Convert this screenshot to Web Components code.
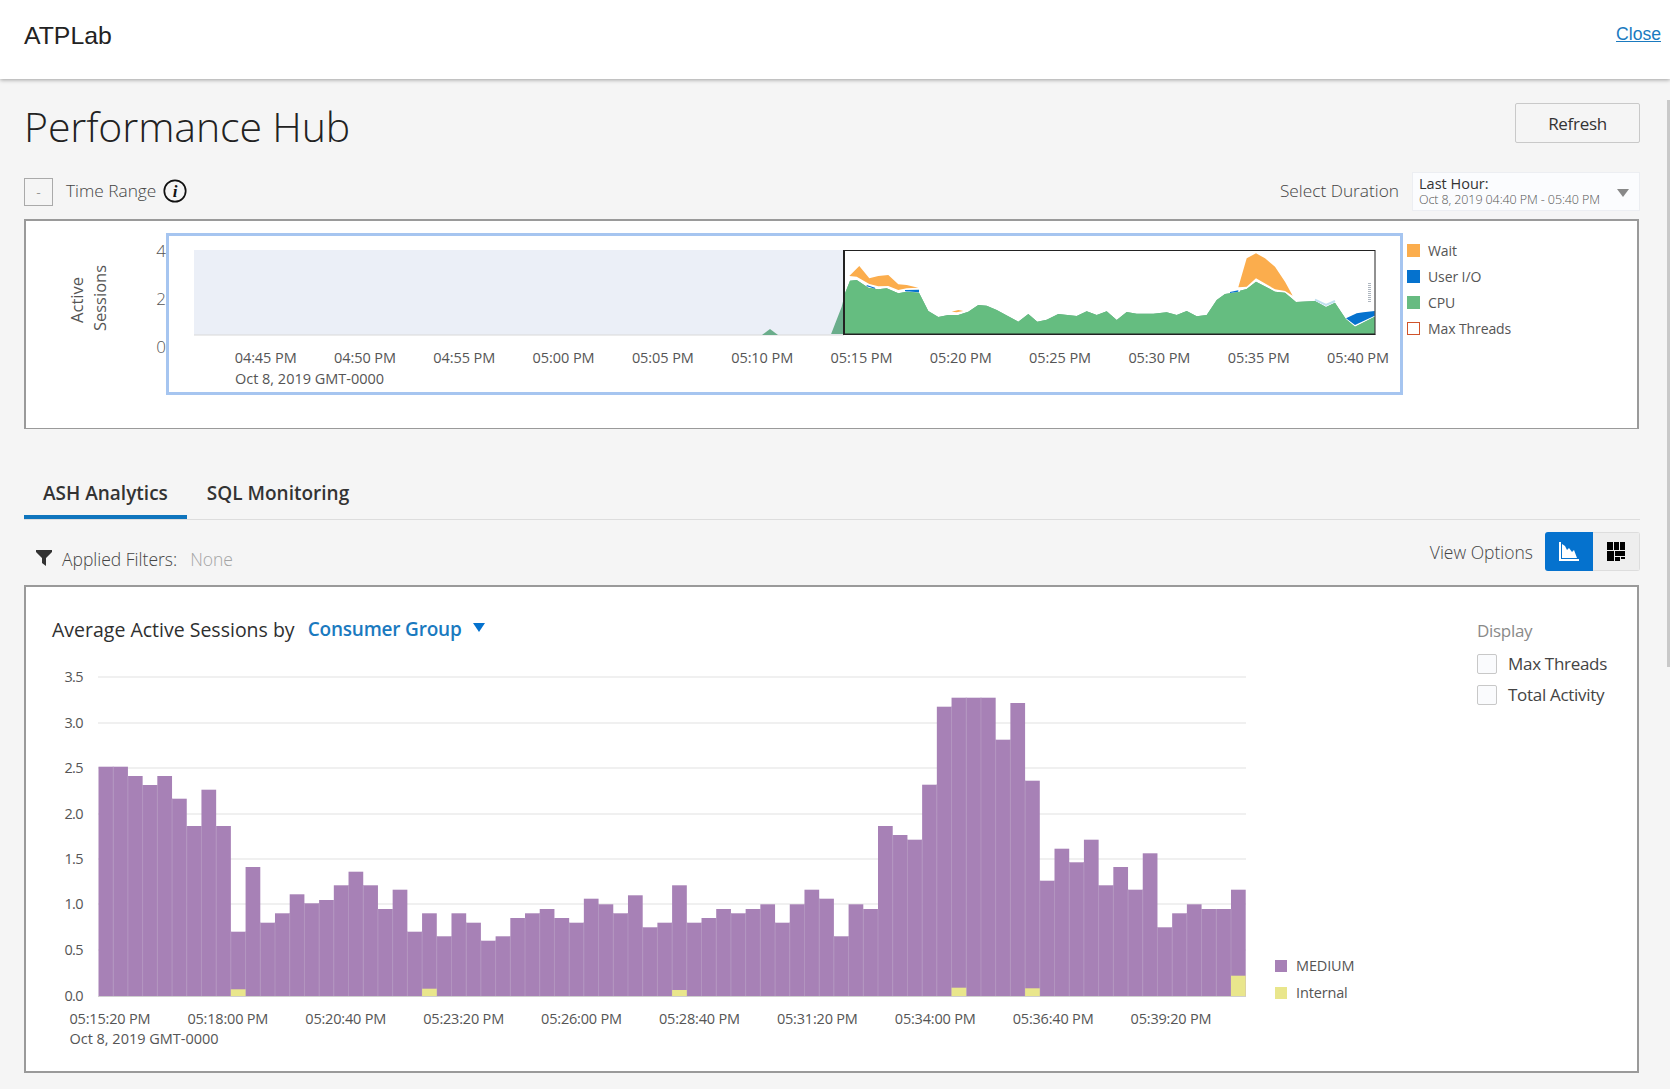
<!DOCTYPE html>
<html lang="en">
<head>
<meta charset="utf-8">
<title>Performance Hub</title>
<style>
  html, body { margin: 0; height: 100%; overflow: hidden; }
  body {
    background: #f5f5f5;
    color: #333;
    font-family: "Open Sans", "Liberation Sans", sans-serif;
  }
  page-scrollbar {
    position: fixed;
    right: 0;
    top: 100px;
    width: 3px;
    height: 567px;
    background: #c9c9c9;
  }
</style>
</head>
<body>
<app-header></app-header>
<hub-page></hub-page>
<page-scrollbar></page-scrollbar>

<script>
(function(){

  const SVG_TEXT = 'font-family:"Open Sans","Liberation Sans",sans-serif;';

  function define(name, css, html) {
    customElements.define(name, class extends HTMLElement {
      constructor() {
        super();
        this.attachShadow({ mode: "open" });
        this.shadowRoot.innerHTML = "<style>" + css + "</style>" + (typeof html === "function" ? html(this) : html);
      }
    });
  }

  define("page-scrollbar", ":host{display:block}", "");

  define("app-header", `
    :host {
      display: flex;
      position: relative;
      z-index: 2;
      box-sizing: border-box;
      height: 79px;
      padding: 0 9px 7px 24px;
      align-items: center;
      justify-content: space-between;
      background: #fff;
      box-shadow: 0 1px 4px rgba(0,0,0,.35);
      font-family: "Liberation Sans", Arial, sans-serif;
    }
    .name { font-size: 24.8px; color: #222; }
    a { font-size: 17.6px; color: #1a7abf; text-decoration: underline; margin-bottom: 4px; }
  `, `<span class="name">ATPLab</span><a href="#">Close</a>`);

  define("plain-button", `
    :host {
      display: inline-flex;
      box-sizing: border-box;
      align-items: center;
      justify-content: center;
      border: 1px solid #c9c9c9;
      border-radius: 2px;
      background: #f5f5f5;
      color: #333;
    }
  `, `<slot></slot>`);

  define("time-legend", `
    :host { display: block; padding: 16px 0 0 3px; font-size: 14px; color: #555; letter-spacing: -.1px; }
    div { display: flex; align-items: center; height: 26.2px; gap: 8px; }
    i { display: block; box-sizing: border-box; width: 13px; height: 13px; }
  `, `
    <div><i style="background:#fbad4d"></i>Wait</div>
    <div><i style="background:#0572ce"></i>User I/O</div>
    <div><i style="background:#67bb81"></i>CPU</div>
    <div><i style="border:1.5px solid #d0532b"></i>Max Threads</div>
  `);

  function pts(list, ox, oy) {
    const out = [];
    for (let i = 0; i < list.length; i += 2) {
      out.push((ox + list[i] / 3).toFixed(1) + "," + (oy + list[i + 1] / 3).toFixed(1));
    }
    return out.join(" ");
  }

  // overview chart, drawn in page coordinates through the viewBox
  function overviewSvg() {
    const left = pts([33,328, 65,245, 75,205, 90,167, 110,165, 145,188, 175,193, 200,190, 235,205, 260,200, 297,203,
      325,258, 355,276, 385,270, 415,270, 445,260, 475,240, 500,242, 530,255, 595,290, 625,267, 652,290, 680,284,
      715,267, 770,273, 800,259, 830,270, 860,259, 890,285, 920,261, 950,266, 1000,266, 1040,262, 1070,270, 1100,258,
      1130,274, 1160,270, 1190,225, 1215,207, 1260,200], 820, 225);
    const right = pts([60,197, 80,192, 108,170, 165,200, 195,203, 228,231, 285,228, 318,246, 345,233, 378,283, 405,305, 464,275, 464,328], 1220, 225);
    const green = left + " " + right + " 831,334";
    const waitA = pts([88,153, 118,123, 148,160, 175,153, 205,150, 235,178, 260,180, 295,188, 260,190, 235,195, 205,183, 175,184, 148,177, 110,155], 820, 225);
    const waitB = pts([395,260, 415,255, 430,258, 410,262], 820, 225);
    const waitC = pts([55,187, 80,100, 108,85, 135,100, 165,125, 195,170, 218,212, 195,198, 165,193, 108,160, 80,185], 1220, 225);
    const ioA = pts([140,180, 165,188, 165,191, 140,184], 820, 225);
    const ioD = pts([255,195, 297,194, 297,202, 255,199], 820, 225);
    const ioB = pts([378,280, 410,265, 430,262, 464,258, 464,272, 405,300], 1220, 225);
    const ioC = pts([30,201, 55,196, 55,200, 30,204], 1220, 225);
    const times = ["04:45 PM","04:50 PM","04:55 PM","05:00 PM","05:05 PM","05:10 PM","05:15 PM","05:20 PM","05:25 PM","05:30 PM","05:35 PM","05:40 PM"];
    const labels = times.map((t, i) =>
      `<text x="${265.7 + i * 99.3}" y="363" text-anchor="middle" textLength="62">${t}</text>`).join("");
    return `<svg width="1378" height="175" viewBox="26 221 1378 175" style="${SVG_TEXT}display:block">
      <rect x="194" y="250" width="650" height="85" fill="#ebeff7"/>
      <line x1="194" y1="335" x2="844" y2="335" stroke="#d8d8d8"/>
      <polygon points="762,335 770,329 778,335" fill="#6aad8b"/>
      <clipPath id="sel"><rect x="844" y="250" width="531" height="85"/></clipPath>
      <polygon points="${green}" fill="#6aad8b"/>
      <g clip-path="url(#sel)">
        <polygon points="${green}" fill="#65bd80"/>
        <polyline points="${pts([88,160, 110,158, 145,182, 175,187, 200,184, 235,199, 260,194, 297,197],820,225)}" fill="none" stroke="#fff" stroke-width="1.5"/>
        <polyline points="${pts([60,191, 80,186, 108,164, 165,194, 195,197, 218,214],1220,225)}" fill="none" stroke="#fff" stroke-width="1.5"/>
        <polyline points="${pts([285,224, 318,240, 345,228],1220,225)}" fill="none" stroke="#bfe0ee" stroke-width="2"/>
        <polygon points="${waitA}" fill="#fbad4d"/>
        <polygon points="${waitB}" fill="#fbad4d"/>
        <polygon points="${waitC}" fill="#fbad4d"/>
        <polygon points="${ioA}" fill="#0572ce"/>
        <polygon points="${ioD}" fill="#0572ce"/>
        <polygon points="${ioB}" fill="#0572ce"/>
        <polygon points="${ioC}" fill="#0572ce"/>
      </g>
      <rect x="844" y="250.5" width="531" height="83.5" fill="none" stroke="#222" stroke-width="1"/>
      <line x1="844" y1="250" x2="844" y2="335" stroke="#222" stroke-width="2"/>
      <line x1="844" y1="334.5" x2="1375.5" y2="334.5" stroke="#222" stroke-width="1"/>
      <line x1="1369.5" y1="283" x2="1369.5" y2="302" stroke="#aeb6bf" stroke-width="3" stroke-dasharray="1 1"/>
      <rect x="167.5" y="234.5" width="1234" height="159" fill="none" stroke="#a6c5f0" stroke-width="3"/>
      <g font-size="17" font-weight="300" fill="#555" text-anchor="end">
        <text x="166" y="256.5">4</text><text x="166" y="305">2</text><text x="166" y="353">0</text>
      </g>
      <g font-size="16.5" fill="#555" text-anchor="middle">
        <text transform="translate(82.5,300) rotate(-90)">Active</text>
        <text transform="translate(106,298) rotate(-90)">Sessions</text>
      </g>
      <g font-size="14.5" fill="#555">${labels}
        <text x="235" y="384" textLength="149">Oct 8, 2019 GMT-0000</text>
      </g>
    </svg>`;
  }

  define("time-panel", `
    :host {
      display: flex;
      box-sizing: border-box;
      height: 210px;
      border: 2px solid #9a9a9a;
      border-bottom-width: 1px;
      background: #fff;
    }
  `, () => overviewSvg() + `<time-legend></time-legend>`);

  define("tab-bar", `
    :host {
      display: flex;
      box-sizing: border-box;
      height: 42px;
      border-bottom: 1px solid #ddd;
      font-size: 19px;
      font-weight: 600;
      color: #333;
    }
    span { display: block; padding: 0 19px; line-height: 30px; height: 41px; box-sizing: border-box; }
    .on { border-bottom: 4px solid #0f75bd; }
  `, `<span class="on">ASH Analytics</span><span style="padding-left:20px">SQL Monitoring</span>`);

  define("view-switch", `
    :host { display: flex; height: 39px; border-radius: 3px; overflow: hidden; }
    div { width: 48px; display: flex; align-items: center; justify-content: center; }
    .on { background: #0572ce; }
    .off { width: 47px; box-sizing: border-box; background: #eee; border: 1px solid #ddd; border-left: 0; }
    svg { display: block; }
  `, `
    <div class="on">
      <svg width="20" height="20" viewBox="0 0 20 20" fill="#fff">
        <path d="M0 0H2V17H20V19H0Z"/>
        <path d="M3 16V2L6 4L8 8L10 6L13 10L15 8L18 16Z"/>
      </svg>
    </div>
    <div class="off">
      <svg width="18" height="19" viewBox="0 0 18 19" fill="#000">
        <rect x="0" y="0" width="6" height="8"/><rect x="7" y="0" width="5" height="8"/><rect x="13" y="0" width="5" height="8"/>
        <rect x="0" y="9" width="7" height="10"/><rect x="8" y="9" width="10" height="5"/><rect x="8" y="15" width="5" height="4"/><rect x="14" y="15" width="4" height="2"/>
      </svg>
    </div>
  `);

  // bar tops read off the reference, in thirds of a pixel below y=660
  const TOPS = [320,320,348,375,348,416,498,389,498,815,621,788,760,703,730,720,676,635,676,747,689,815,760,829,760,788,842,829,774,760,747,774,788,716,733,760,706,
    802,788,676,788,774,747,760,747,733,788,733,689,716,829,733,747,498,525,539,374,140,113,113,113,239,129,362,662,566,607,539,676,621,689,580,802,760,733,747,747,689];
  const INTERNAL = { 9: 988, 22: 986, 39: 990, 58: 983, 63: 985, 77: 947 };

  function barSvg() {
    const x0 = 98.5, w = 1147.2 / TOPS.length, base = 996;
    let bars = "", gaps = "", extra = "";
    TOPS.forEach((t, i) => {
      const x = x0 + i * w, top = 660 + t / 3;
      bars += `<rect x="${x.toFixed(2)}" y="${top.toFixed(1)}" width="${w.toFixed(2)}" height="${(base - top).toFixed(1)}"/>`;
      if (i) gaps += `<line x1="${x.toFixed(2)}" x2="${x.toFixed(2)}" y1="${Math.max(top, 660 + TOPS[i - 1] / 3).toFixed(1)}" y2="${base}"/>`;
      if (INTERNAL[i]) {
        const y = 660 + INTERNAL[i] / 3;
        extra += `<rect x="${x.toFixed(2)}" y="${y.toFixed(1)}" width="${w.toFixed(2)}" height="${(base - y).toFixed(1)}"/>`;
      }
    });
    const ticks = ["0.0","0.5","1.0","1.5","2.0","2.5","3.0","3.5"];
    const ys = [996,950,904,859,814,768,723,677];
    const grid = ys.slice(1).map(y => `<line x1="98" x2="1246" y1="${y}" y2="${y}"/>`).join("");
    const ylab = ticks.map((t, i) => `<text x="64.5" y="${ys[i] + 4.5}" textLength="19">${t}</text>`).join("");
    const times = ["05:15:20 PM","05:18:00 PM","05:20:40 PM","05:23:20 PM","05:26:00 PM","05:28:40 PM","05:31:20 PM","05:34:00 PM","05:36:40 PM","05:39:20 PM"];
    const xlab = times.map((t, i) => `<text x="${69.5 + i * 117.9}" y="1024" textLength="81">${t}</text>`).join("");
    return `<svg width="1249" height="392" viewBox="26 656 1249 392" style="${SVG_TEXT}display:block">
      <g stroke="#f0f0f0" stroke-width="2">${grid}</g>
      <g fill="#a781b6">${bars}</g>
      <g stroke="#b294bf" stroke-width="1">${gaps}</g>
      <g fill="#e9e68c">${extra}</g>
      <line x1="98" x2="1246" y1="996.5" y2="996.5" stroke="#cfcfcf"/>
      <g font-size="14.5" fill="#555">${ylab}${xlab}
        <text x="69.5" y="1044" textLength="149">Oct 8, 2019 GMT-0000</text>
      </g>
    </svg>`;
  }

  define("bar-legend", `
    :host { display: block; margin-bottom: 42px; font-size: 14.5px; color: #555; letter-spacing: -.15px; }
    div { display: flex; align-items: center; height: 27px; gap: 9px; }
    i { display: block; width: 12px; height: 12px; }
  `, `
    <div><i style="background:#a781b6"></i>MEDIUM</div>
    <div><i style="background:#e9e68c"></i>Internal</div>
  `);

  define("display-options", `
    :host { display: block; width: 160px; padding-top: 32px; font-size: 17px; color: #444; letter-spacing: -.3px; }
    .head { color: #8a8a8a; line-height: 24px; margin-bottom: 5px; }
    label { display: flex; align-items: center; height: 31px; gap: 11px; }
    i { display: block; box-sizing: border-box; width: 20px; height: 20px; border: 1px solid #c8c8c8; border-radius: 2px; background: #fafbfd; }
  `, `
    <div class="head">Display</div>
    <label><i></i>Max Threads</label>
    <label><i></i>Total Activity</label>
  `);

  define("ash-panel", `
    :host {
      display: flex;
      box-sizing: border-box;
      height: 488px;
      border: 2px solid #9a9a9a;
      background: #fff;
    }
    .main { flex: 1; min-width: 0; }
    .title {
      display: flex;
      height: 69px;
      box-sizing: border-box;
      padding: 30px 0 0 26px;
      font-size: 19.5px;
      color: #2f2f2f;
      line-height: 26px;
    }
    .group { margin: -1px 0 0 13px; font-size: 19px; letter-spacing: -.2px; color: #1a7abf; font-weight: 600; }
    .caret { margin: 6px 0 0 11px; width: 0; height: 0; border: 6px solid transparent; border-top: 9px solid #0572ce; border-bottom: 0; }
    .row { display: flex; align-items: flex-end; }
  `, () => `
    <div class="main">
      <div class="title"><span>Average Active Sessions by</span><span class="group">Consumer Group</span><span class="caret"></span></div>
      <div class="row">${barSvg()}<bar-legend></bar-legend></div>
    </div>
    <display-options></display-options>
  `);

  define("hub-page", `
    :host { display: block; padding: 0 30px 0 24px; }
    .top { display: flex; justify-content: space-between; align-items: center; height: 40px; margin-top: 24px; }
    h1 { margin: 0; padding-top: 6px; font-size: 41px; font-weight: 300; color: #222; line-height: 40px; letter-spacing: -.1px; }
    plain-button.refresh { width: 125px; height: 40px; font-size: 17px; letter-spacing: -.3px; }
    .range { display: flex; align-items: center; height: 39px; margin-top: 29px; font-size: 17.3px; font-weight: 300; color: #444; }
    .range span { position: relative; top: -1px; }
    plain-button.mini { width: 29px; height: 28px; font-size: 14px; color: #777; border-color: #aaa; border-radius: 0; margin-right: 13px; }
    .info { margin: 0 0 2px 7px; display: block; }
    .range .sp { flex: 1; }
    .pick {
      position: relative;
      box-sizing: border-box;
      width: 228px;
      height: 39px;
      margin-left: 13px;
      padding: 2px 0 0 6px;
      background: #fbfcfe;
      border: 1px solid #eceef2;
      color: #333;
    }
    .pick b { display: block; font-size: 14.5px; font-weight: 500; line-height: 17px; }
    .pick small { display: block; font-size: 12.5px; line-height: 15px; color: #555; letter-spacing: -.1px; }
    .pick::after {
      content: "";
      position: absolute;
      right: 10px;
      top: 16px;
      border: 6px solid transparent;
      border-top: 8px solid #888;
      border-bottom: 0;
    }
    time-panel { margin: 8px 1px 0 0; }
    tab-bar { margin-top: 49px; }
    .filters { display: flex; align-items: center; height: 39px; margin-top: 12px; font-size: 17.5px; font-weight: 300; color: #444; }
    .funnel { margin: 13px 10px 0 12px; display: block; }
    .none { margin-left: 13px; color: #a4a4a4; }
    .filters span { position: relative; top: 7px; }
    .filters .sp { flex: 1; }
    .filters .view { top: 0; margin-right: 12px; }
    ash-panel { margin: 14px 1px 0 0; }
  `, `
    <div class="top">
      <h1>Performance Hub</h1>
      <plain-button class="refresh">Refresh</plain-button>
    </div>
    <div class="range">
      <plain-button class="mini">-</plain-button>
      <span>Time Range</span>
      <svg class="info" width="24" height="24" viewBox="0 0 24 24">
        <circle cx="12" cy="12" r="10.7" fill="none" stroke="#111" stroke-width="1.7"/>
        <text x="12" y="17.5" text-anchor="middle" font-family="Liberation Serif, serif" font-style="italic" font-weight="700" font-size="17" fill="#111">i</text>
      </svg>
      <span class="sp"></span>
      <span>Select Duration</span>
      <div class="pick"><b>Last Hour:</b><small>Oct 8, 2019 04:40 PM - 05:40 PM</small></div>
    </div>
    <time-panel></time-panel>
    <tab-bar></tab-bar>
    <div class="filters">
      <svg class="funnel" width="16" height="16" viewBox="0 0 16 16"><path d="M0 0H16V2L10 8V16L6 13V8L0 2Z" fill="#333"/></svg>
      <span>Applied Filters:</span><span class="none">None</span>
      <span class="sp"></span>
      <span class="view">View Options</span>
      <view-switch></view-switch>
    </div>
    <ash-panel></ash-panel>
  `);

})();
</script>
</body>
</html>
